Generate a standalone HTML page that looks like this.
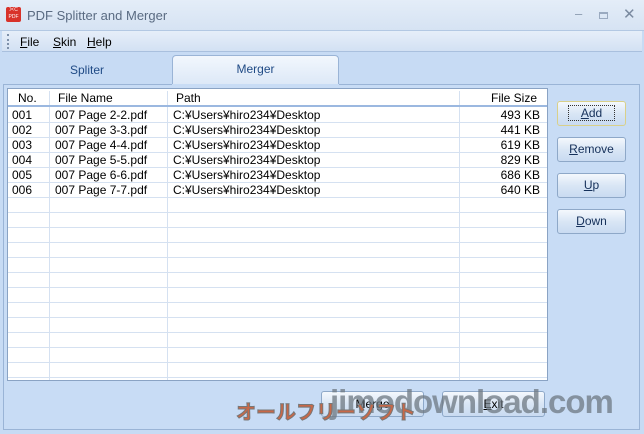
<!DOCTYPE html><html><head><meta charset="utf-8"><style>
*{margin:0;padding:0;box-sizing:border-box}
body{width:644px;height:434px;overflow:hidden;font-family:"Liberation Sans","Noto Sans CJK JP",sans-serif;font-size:12px;background:#c7dbf4;position:relative;color:#000}
.abs{position:absolute}
.title{left:0;top:0;width:644px;height:31px;background:linear-gradient(#e4edf8,#d6e3f3);border-bottom:1px solid #b3c8e3}
.menu{left:2px;top:31px;width:640px;height:21px;background:linear-gradient(#e6eef9,#d3e1f3);border-bottom:1px solid #a9c0de}
.btn{position:absolute;border:1px solid #8ea8c8;border-radius:3px;background:linear-gradient(#f4f8fd,#d9e6f5 50%,#c9dbf1);text-align:center;font-size:12px;color:#15305a;line-height:23px}
.list{left:7px;top:88px;width:541px;height:293px;background:#fff;border:1px solid #8aa3c4;overflow:hidden}
.hd{position:absolute;top:0;height:18px;line-height:18px;border-bottom:2px solid #9bb8e0;width:100%;background:#fff}
.row{position:absolute;left:0;width:100%;height:15px;border-bottom:1px solid #d5e1f1;line-height:15px}
.c{position:absolute;white-space:nowrap}
.vl{position:absolute;top:0;height:293px;width:1px;background:#d5e1f1}
.hv{position:absolute;top:2px;height:14px;width:1px;background:#d5e1f1}
</style></head><body>
<div class="abs title"></div>
<div class="abs" style="left:6px;top:7px;width:15px;height:15px;background:#d8322a;border-radius:2px;color:#fff;font-size:5px;line-height:7px;text-align:center">✂C<br>PDF</div>
<div class="abs" style="left:27px;top:8px;font-size:13px;color:#5a6b82">PDF Splitter and Merger</div>
<div class="abs" style="left:575px;top:6px;color:#8a9ab0;font-size:13px">–</div>
<div class="abs" style="left:599px;top:12px;width:9px;height:7px;border:1px solid #9aaac0;border-top-width:2px"></div>
<div class="abs" style="left:623px;top:5px;color:#7a8aa0;font-size:15px">✕</div>
<div class="abs menu"></div>
<div class="abs" style="left:7px;top:34px;width:2px;height:15px;border-left:2px dotted #7d90aa"></div>
<div class="abs" style="left:20px;top:35px"><u>F</u>ile</div>
<div class="abs" style="left:53px;top:35px"><u>S</u>kin</div>
<div class="abs" style="left:87px;top:35px"><u>H</u>elp</div>
<div class="abs" style="left:70px;top:63px;color:#1f4a85">Spliter</div>
<div class="abs" style="left:172px;top:55px;width:167px;height:30px;background:linear-gradient(#f2f7fd,#dce8f7);border:1px solid #9ab4d6;border-bottom:none;border-radius:4px 4px 0 0;text-align:center;line-height:26px;color:#1f4a85">Merger</div>
<div class="abs" style="left:3px;top:84px;width:637px;height:346px;border:1px solid #9ab4d6;border-top:none;background:#c8dcf5"></div>
<div class="abs" style="left:3px;top:84px;width:169px;height:1px;background:#9ab4d6"></div>
<div class="abs" style="left:339px;top:84px;width:301px;height:1px;background:#9ab4d6"></div>
<div class="abs list">
<div class="vl" style="left:41px"></div><div class="vl" style="left:159px"></div><div class="vl" style="left:451px"></div>
<div class="hd"><span class="hv" style="left:41px"></span><span class="hv" style="left:159px"></span><span class="hv" style="left:451px"></span><span class="c" style="left:10px">No.</span><span class="c" style="left:50px">File Name</span><span class="c" style="left:168px">Path</span><span class="c" style="right:10px">File Size</span></div>
<div class="row" style="top:19px"><span class="c" style="left:4px">001</span><span class="c" style="left:47px">007 Page 2-2.pdf</span><span class="c" style="left:165px">C:¥Users¥hiro234¥Desktop</span><span class="c" style="right:7px">493 KB</span></div>
<div class="row" style="top:34px"><span class="c" style="left:4px">002</span><span class="c" style="left:47px">007 Page 3-3.pdf</span><span class="c" style="left:165px">C:¥Users¥hiro234¥Desktop</span><span class="c" style="right:7px">441 KB</span></div>
<div class="row" style="top:49px"><span class="c" style="left:4px">003</span><span class="c" style="left:47px">007 Page 4-4.pdf</span><span class="c" style="left:165px">C:¥Users¥hiro234¥Desktop</span><span class="c" style="right:7px">619 KB</span></div>
<div class="row" style="top:64px"><span class="c" style="left:4px">004</span><span class="c" style="left:47px">007 Page 5-5.pdf</span><span class="c" style="left:165px">C:¥Users¥hiro234¥Desktop</span><span class="c" style="right:7px">829 KB</span></div>
<div class="row" style="top:79px"><span class="c" style="left:4px">005</span><span class="c" style="left:47px">007 Page 6-6.pdf</span><span class="c" style="left:165px">C:¥Users¥hiro234¥Desktop</span><span class="c" style="right:7px">686 KB</span></div>
<div class="row" style="top:94px"><span class="c" style="left:4px">006</span><span class="c" style="left:47px">007 Page 7-7.pdf</span><span class="c" style="left:165px">C:¥Users¥hiro234¥Desktop</span><span class="c" style="right:7px">640 KB</span></div>
<div class="row" style="top:109px"></div><div class="row" style="top:124px"></div><div class="row" style="top:139px"></div><div class="row" style="top:154px"></div><div class="row" style="top:169px"></div><div class="row" style="top:184px"></div><div class="row" style="top:199px"></div><div class="row" style="top:214px"></div><div class="row" style="top:229px"></div><div class="row" style="top:244px"></div><div class="row" style="top:259px"></div><div class="row" style="top:274px"></div>
</div>
<div class="btn" style="left:557px;top:101px;width:69px;height:25px;border-color:#d9d08a"><span style="border:1px dotted #333;padding:0 12px"><u>A</u>dd</span></div>
<div class="btn" style="left:557px;top:137px;width:69px;height:25px"><u>R</u>emove</div>
<div class="btn" style="left:557px;top:173px;width:69px;height:25px"><u>U</u>p</div>
<div class="btn" style="left:557px;top:209px;width:69px;height:25px"><u>D</u>own</div>
<div class="btn" style="left:321px;top:391px;width:103px;height:26px;line-height:24px;color:#000">Merge</div>
<div class="btn" style="left:442px;top:391px;width:103px;height:26px;line-height:24px;color:#000"><u>E</u>xit</div>
<div class="abs" style="left:330px;top:383px;font-size:33px;font-weight:bold;color:rgba(110,120,130,.75);letter-spacing:-1px">jimodownload.com</div>
<div class="abs" style="left:236px;top:396px;font-size:20px;font-weight:bold;color:#c86848;-webkit-text-stroke:1px #777">オールフリーソフト</div>
</body></html>
